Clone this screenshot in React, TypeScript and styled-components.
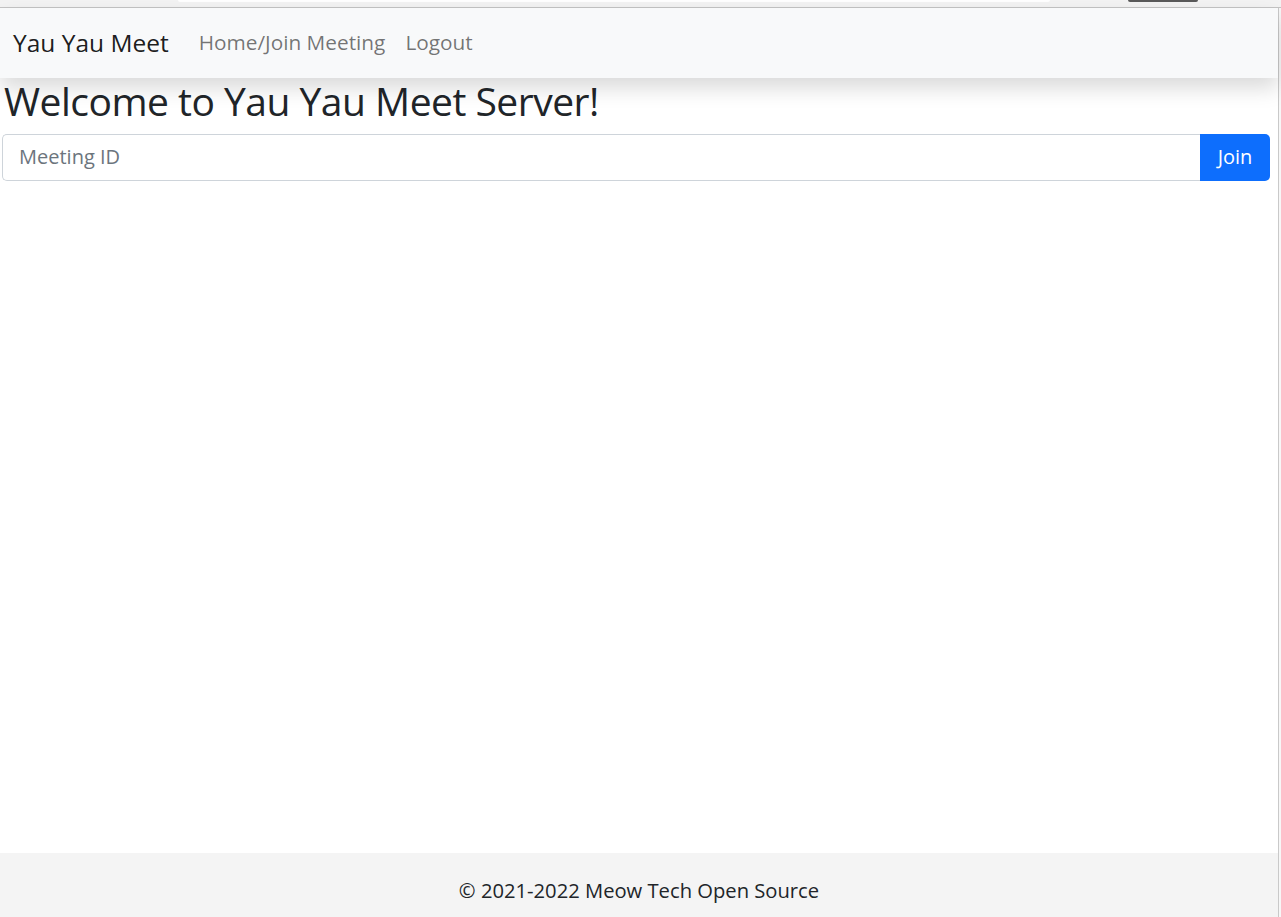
import React from "react";
import styled, { createGlobalStyle } from "styled-components";

const Global = createGlobalStyle`
  html, body { margin: 0; padding: 0; background: #ffffff; }
  body { font-family: "Open Sans", "Noto Sans", sans-serif; color: #212529; }
  * { box-sizing: border-box; }
`;

const Chrome = styled.div`
  height: 8px;
  background: #f3f3f3;
  border-bottom: 1px solid #c4c4c4;
  display: flex;
  align-items: flex-start;
  padding-left: 178px;
`;

const AddressEdge = styled.div`
  width: 872px;
  height: 2px;
  background: #ffffff;
  border-radius: 0 0 6px 6px;
`;

const ButtonEdge = styled.div`
  margin-left: 78px;
  width: 70px;
  height: 2px;
  background: #5a5a5a;
  border-radius: 0 0 6px 6px;
`;

const Frame = styled.div`
  display: flex;
  min-height: 909px;
`;

const Main = styled.div`
  width: 1278px;
  display: flex;
  flex-direction: column;
`;

const Edge = styled.div`
  flex: 1;
  border-left: 1px solid #c9c9c9;
  background: #f7f7f7;
`;

const Navbar = styled.nav`
  position: relative;
  z-index: 1;
  height: 70px;
  background: #f8f9fa;
  box-shadow: 0 10px 20px rgba(0, 0, 0, 0.15);
  display: flex;
  align-items: center;
  padding: 0 13px 2px;
`;

const Brand = styled.a`
  font-size: 24.5px;
  color: rgba(0, 0, 0, 0.9);
  margin-right: 20px;
  text-decoration: none;
`;

const NavLink = styled.a`
  font-size: 20.8px;
  color: rgba(0, 0, 0, 0.55);
  padding: 0 10px;
  text-decoration: none;
`;

const Content = styled.main`
  flex: 1;
  padding: 0 8px 0 2px;
`;

const Title = styled.h1`
  margin: 0 0 10px 2px;
  font-size: 39px;
  font-weight: 400;
  letter-spacing: -0.5px;
  line-height: 46px;
  color: #212529;
`;

const InputGroup = styled.div`
  display: flex;
  height: 47px;
`;

const Input = styled.input`
  flex: 1;
  border: 1px solid #ced4da;
  border-right: none;
  border-radius: 5px 0 0 5px;
  padding: 0 16px 3px;
  font-family: inherit;
  font-size: 20px;
  color: #212529;
  &::placeholder { color: #6c757d; }
  outline: none;
`;

const JoinButton = styled.button`
  width: 70px;
  border: none;
  border-radius: 0 5px 5px 0;
  background: #0d6efd;
  color: #ffffff;
  font-family: inherit;
  font-size: 20px;
  padding: 0 0 3px;
`;

const Footer = styled.footer`
  height: 64px;
  background: #f4f4f4;
  display: flex;
  align-items: center;
  justify-content: center;
  padding-top: 10px;
  font-size: 20.2px;
  color: #212529;
`;

export default function App() {
  return (
    <>
      <Global />
      <Chrome>
        <AddressEdge />
        <ButtonEdge />
      </Chrome>
      <Frame>
        <Main>
          <Navbar>
            <Brand href="#">Yau Yau Meet</Brand>
            <NavLink href="#">Home/Join Meeting</NavLink>
            <NavLink href="#">Logout</NavLink>
          </Navbar>
          <Content>
            <Title>Welcome to Yau Yau Meet Server!</Title>
            <InputGroup>
              <Input placeholder="Meeting ID" />
              <JoinButton>Join</JoinButton>
            </InputGroup>
          </Content>
          <Footer>© 2021-2022 Meow Tech Open Source</Footer>
        </Main>
        <Edge />
      </Frame>
    </>
  );
}
